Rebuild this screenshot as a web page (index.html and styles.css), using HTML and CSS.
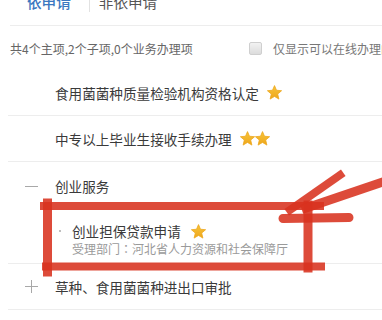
FILE: index.html
```html
<!DOCTYPE html>
<html lang="zh-CN">
<head>
<meta charset="utf-8">
<title>依申请</title>
<link rel="stylesheet" href="styles.css">
</head>
<body>
<svg class="defs" width="0" height="0">
  <defs>
    <linearGradient id="sg" x1="0" y1="0" x2="0" y2="1">
      <stop offset="0" stop-color="#f7c53a"/>
      <stop offset="1" stop-color="#eea61c"/>
    </linearGradient>
    <symbol id="star" viewBox="0 0 15 15">
      <polygon points="7.5,0.6 9.5,5.25 14.6,5.7 10.7,9.05 11.9,14.1 7.5,11.4 3.1,14.1 4.3,9.05 0.4,5.7 5.5,5.25" fill="url(#sg)" stroke="#eea81e" stroke-width="0.8" stroke-linejoin="round"/>
    </symbol>
  </defs>
</svg>
<div class="page">
  <div class="tabs">
    <span class="tab active">依申请</span>
    <span class="tab-sep"></span>
    <span class="tab">非依申请</span>
  </div>
  <div class="summary">
    <span class="count">共4个主项,2个子项,0个业务办理项</span>
    <label class="online"><span class="checkbox"></span><span>仅显示可以在线办理的事项</span></label>
  </div>
  <ul class="list">
    <li class="row">
      <span class="name">食用菌菌种质量检验机构资格认定</span>
      <span class="stars"><svg class="star"><use href="#star"/></svg></span>
    </li>
    <li class="row">
      <span class="name">中专以上毕业生接收手续办理</span>
      <span class="stars"><svg class="star"><use href="#star"/></svg><svg class="star"><use href="#star"/></svg></span>
    </li>
    <li class="group open">
      <div class="group-head"><span class="toggle minus"></span><span class="name">创业服务</span></div>
      <div class="sub">
        <span class="dot"></span>
        <div class="sub-body">
          <div class="sub-title"><span class="name">创业担保贷款申请</span><span class="stars"><svg class="star"><use href="#star"/></svg></span></div>
          <div class="sub-dept">受理部门<span class="colon" lang="zh-TW">：</span>河北省人力资源和社会保障厅</div>
        </div>
      </div>
    </li>
    <li class="row group-closed">
      <span class="toggle plus"></span><span class="name">草种、食用菌菌种进出口审批</span>
    </li>
  </ul>
  <svg class="marks" width="382" height="320" viewBox="0 0 382 320">
    <g fill="none" stroke="#d8321f" stroke-opacity="0.88" stroke-linecap="square">
      <line x1="44" y1="206" x2="320" y2="206" stroke-width="8"/>
      <line x1="47.5" y1="203" x2="47.5" y2="272" stroke-width="9"/>
      <line x1="46" y1="266.5" x2="321" y2="266.5" stroke-width="8"/>
      <line x1="308" y1="205" x2="308" y2="268" stroke-width="9"/>
      <line x1="283" y1="218.5" x2="349" y2="217.5" stroke-width="9" stroke-linecap="round"/>
      <line x1="290" y1="210" x2="340" y2="175" stroke-width="8"/>
      <line x1="306" y1="208" x2="386" y2="181" stroke-width="9"/>
    </g>
  </svg>
</div>
</body>
</html>
```
FILE: styles.css
```css
html, body {
  margin: 0;
  padding: 0;
  background: #ffffff;
  overflow: hidden;
}
body {
  font-family: "Noto Sans CJK SC", "Noto Sans", sans-serif;
  color: #333;
}
.defs {
  position: absolute;
  width: 0;
  height: 0;
}
.page {
  position: relative;
  width: 382px;
  height: 320px;
  overflow: hidden;
}
.tabs {
  display: flex;
  align-items: flex-start;
  height: 25px;
  margin-left: 10px;
  border-bottom: 1px solid #ededed;
}
.tab {
  font-size: 14.6px;
  line-height: 20px;
  margin-top: -8px;
  color: #555;
}
.tab.active {
  color: #3b78c0;
  font-weight: 500;
  margin-left: 17px;
}
.tab-sep {
  width: 1px;
  height: 12px;
  background: #e2e2e2;
  margin: 0 9px 0 18px;
}
.summary {
  display: grid;
  grid-template-columns: 239px 1fr;
  align-items: center;
  height: 44px;
  margin-left: 10px;
  font-size: 12px;
  color: #666;
}
.count {
  white-space: nowrap;
}
.online {
  display: flex;
  align-items: center;
  white-space: nowrap;
  color: #777;
}
.checkbox {
  width: 11px;
  height: 11px;
  border: 1px solid #cfcfcf;
  border-radius: 2px;
  background: linear-gradient(#f2f2f2, #dcdcdc);
  margin-right: 11px;
  flex: none;
}
.list {
  list-style: none;
  margin: 0;
  padding: 0;
}
.row {
  display: flex;
  align-items: center;
  height: 45px;
  margin-left: 8px;
  padding-left: 47px;
  border-bottom: 1px solid #ededed;
  font-size: 13.6px;
  color: #3a3a3a;
}
.stars {
  display: inline-flex;
  gap: 0;
  margin-left: 8px;
}
.star {
  display: block;
  width: 15px;
  height: 15px;
}
.group {
  margin-left: 8px;
  border-bottom: 1px solid #ededed;
  font-size: 13.6px;
  color: #3a3a3a;
}
.group-head {
  display: flex;
  align-items: center;
  height: 48px;
  padding-left: 17px;
}
.toggle {
  position: relative;
  width: 13px;
  height: 13px;
  margin-right: 17px;
  flex: none;
}
.toggle::before {
  content: "";
  position: absolute;
  left: 0;
  right: 0;
  top: 6px;
  height: 1px;
  background: #a8a8a8;
}
.plus::after {
  content: "";
  position: absolute;
  top: 0;
  bottom: 0;
  left: 6px;
  width: 1px;
  background: #a8a8a8;
}
.group-closed {
  padding-left: 17px;
}
.sub {
  display: flex;
  align-items: flex-start;
  padding: 12px 0 5px 51px;
}
.dot {
  width: 2px;
  height: 2px;
  border-radius: 1px;
  background: #aaa;
  margin: 8px 11px 0 0;
  flex: none;
}
.sub-title {
  display: flex;
  align-items: center;
  height: 18px;
}
.sub-title .stars {
  margin-left: 10px;
}
.sub-dept {
  font-size: 12px;
  line-height: 18px;
  color: #9a9a9a;
  white-space: nowrap;
}
.colon {
  font-family: "Noto Sans CJK TC", "Noto Sans CJK SC", sans-serif;
}
.marks {
  position: absolute;
  left: 0;
  top: 0;
  pointer-events: none;
}
```
